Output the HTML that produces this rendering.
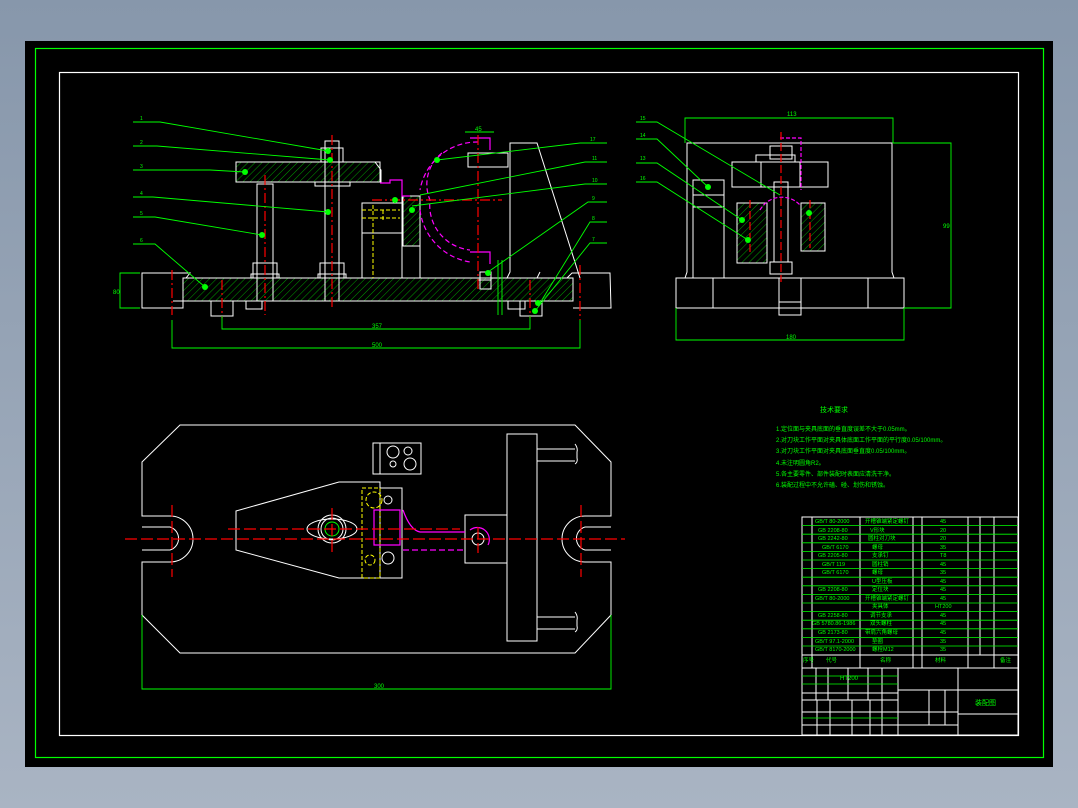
<!DOCTYPE html>
<html><head><meta charset="utf-8"><style>
html,body{margin:0;padding:0;width:1078px;height:808px;overflow:hidden;background:linear-gradient(#8797ab,#a9b4c3);}
svg{display:block}
text{font-family:"Liberation Sans","Noto Sans CJK SC",sans-serif;fill:#00ff00}
</style></head><body>
<svg width="1078" height="808" viewBox="0 0 1078 808" xmlns="http://www.w3.org/2000/svg">
<defs>
<pattern id="h" width="5" height="5" patternUnits="userSpaceOnUse" patternTransform="rotate(45)"><line x1="0" y1="0" x2="0" y2="5" stroke="#00c800" stroke-width="0.8"/></pattern>
</defs>
<rect x="25" y="41" width="1028" height="726" fill="#000"/>
<rect x="35.5" y="48.5" width="1008" height="709" fill="none" stroke="#00ff00" stroke-width="1.2"/>
<rect x="59.5" y="72.5" width="959" height="663" fill="none" stroke="#fff" stroke-width="1.2"/>

<!-- FRONT VIEW -->
<g fill="none" stroke="#fff" stroke-width="1">
<rect x="183" y="278" width="390" height="23" fill="url(#h)"/>
<path d="M183 278 H186 L190 273 H142 L142 308 H183 V301"/>
<path d="M573 301 V278 H567 L572 273 H610 L611 308 H573"/>
<path d="M173 301 H246 V309 H262 V301 M430 301 H508 V309 H525 V301 H573"/>
<rect x="211" y="301" width="22" height="15"/><rect x="520" y="301" width="22" height="15"/>
<rect x="236" y="162" width="144" height="20" fill="url(#h)"/>
<path d="M314 162 H375 L381 170 V182 H350 V186 H315 V182"/>
<rect x="257" y="184" width="16" height="117"/>
<rect x="325" y="141" width="14" height="160"/>
<rect x="321" y="148" width="22" height="14"/><rect x="320" y="263" width="24" height="15"/><rect x="253" y="263" width="24" height="15"/>
<rect x="251" y="274" width="28" height="4"/><rect x="318" y="274" width="28" height="4"/>
<rect x="362" y="203" width="40" height="75"/>
<line x1="362" y1="233" x2="402" y2="233"/>
<path d="M402 278 V196 H420 V278"/>
<rect x="403" y="196" width="17" height="50" fill="url(#h)"/>
<path d="M507 278 L510 272 V143 H537 L580 278"/>
<path d="M537 278 L540 272"/>
<rect x="468" y="153" width="40" height="14"/>
<rect x="480" y="272" width="11" height="17"/>
<path d="M478 280 H491"/>
</g>
<g fill="none" stroke="#ff00ff" stroke-width="1.2">
<path d="M478 142 A58 58 0 0 0 420 190" stroke-dasharray="5 3"/>
<path d="M442 153 A40 40 0 0 0 430 200 A45 45 0 0 0 470 250" stroke-dasharray="5 3"/>
<path d="M420 210 A60 60 0 0 0 470 262" stroke-dasharray="5 3"/>
<path d="M470 138 H490 V150 M470 252 H490 V264"/>
<path d="M380 183 H390 V180 H402 V196 H410"/>
</g>
<g stroke="#ffff00" stroke-width="1" fill="none" stroke-dasharray="4 2">
<path d="M362 210 H400 M362 218 H400 M373 205 V278 M383 210 V220"/>
</g>
<g stroke="#ff0000" stroke-width="1.2" stroke-dasharray="10 3 2 3" fill="none">
<line x1="265" y1="175" x2="265" y2="315"/><line x1="332" y1="135" x2="332" y2="310"/>
<line x1="478" y1="135" x2="478" y2="292"/><line x1="372" y1="200" x2="502" y2="200"/>
<line x1="172" y1="270" x2="172" y2="315"/><line x1="580" y1="265" x2="580" y2="320"/>
<line x1="222" y1="280" x2="222" y2="318"/><line x1="530" y1="280" x2="530" y2="318"/>
</g>
<g stroke="#00ff00" stroke-width="0.9" fill="none">
<path d="M133 122 H160 L328 151"/><path d="M133 146 H157 L330 160"/><path d="M133 170 H210 L245 172"/>
<path d="M133 197 H153 L328 212"/><path d="M133 217 H155 L262 235"/><path d="M133 244 H155 L205 287"/>
<path d="M607 143 H580 L437 160"/><path d="M607 162 H585 L420 195"/><path d="M607 184 H585 L412 206"/>
<path d="M607 202 H588 L488 272"/><path d="M607 222 H590 L540 303"/><path d="M607 243 H590 L535 311"/>
<path d="M172 320 V348 H580 V320"/><path d="M222 316 V329 H530 V316"/>
<path d="M140 273 H120 V308 H140"/>
<path d="M465 132 H494 M498 315 V260 M502 315 V260"/>
</g>
<g fill="#00ff00">
<circle cx="328" cy="151" r="3"/><circle cx="330" cy="160" r="3"/><circle cx="245" cy="172" r="3"/>
<circle cx="328" cy="212" r="3"/><circle cx="262" cy="235" r="3"/><circle cx="205" cy="287" r="3"/>
<circle cx="437" cy="160" r="3"/><circle cx="395" cy="200" r="3"/><circle cx="412" cy="210" r="3"/>
<circle cx="488" cy="273" r="3"/><circle cx="538" cy="303" r="3"/><circle cx="535" cy="311" r="3"/>
</g>
<g font-size="5">
<text x="140" y="120">1</text><text x="140" y="144">2</text><text x="140" y="168">3</text><text x="140" y="195">4</text><text x="140" y="215">5</text><text x="140" y="242">6</text>
<text x="590" y="141">17</text><text x="592" y="160">11</text><text x="592" y="182">10</text><text x="592" y="200">9</text><text x="592" y="220">8</text><text x="592" y="241">7</text>
<text x="640" y="120">15</text><text x="640" y="137">14</text><text x="640" y="160">13</text><text x="640" y="180">16</text>
</g>
<g font-size="6"><text x="372" y="328">357</text><text x="372" y="347">500</text><text x="113" y="294">80</text><text x="475" y="131">45</text></g>

<!-- SIDE VIEW -->
<g fill="none" stroke="#fff" stroke-width="1">
<path d="M676 278 H904 V308 H676 Z M713 278 V308 M868 278 V308"/>
<rect x="779" y="278" width="22" height="37"/><line x1="779" y1="302" x2="801" y2="302"/>
<path d="M685 278 L687 272 V143 H892 V272 L894 278"/>
<rect x="693" y="180" width="31" height="98"/><line x1="693" y1="195" x2="724" y2="195"/><line x1="693" y1="207" x2="724" y2="207"/>
<rect x="732" y="162" width="96" height="25"/><line x1="761" y1="162" x2="761" y2="187"/><line x1="800" y1="162" x2="800" y2="187"/>
<path d="M756 162 V155 H795 V162"/><rect x="770" y="146" width="22" height="13"/>
<rect x="774" y="182" width="14" height="80"/>
<rect x="770" y="262" width="22" height="12"/>
<rect x="737" y="203" width="30" height="60" fill="url(#h)"/>
<rect x="801" y="203" width="24" height="48" fill="url(#h)"/>
</g>
<g stroke="#ff00ff" fill="none" stroke-width="1.2"><path d="M760 210 A25 25 0 0 1 800 205" stroke-dasharray="4 2"/><path d="M780 138 H801 V190" stroke-dasharray="4 2"/></g>
<g stroke="#ff0000" stroke-width="1.2" stroke-dasharray="8 3" fill="none"><line x1="781" y1="132" x2="781" y2="282"/><line x1="750" y1="200" x2="750" y2="255"/><line x1="810" y1="200" x2="810" y2="248"/></g>
<g stroke="#00ff00" stroke-width="0.9" fill="none">
<path d="M685 143 V118 H893 V143"/><path d="M893 143 H951 V308 H904"/><path d="M676 308 V340 H904 V308"/>
<path d="M636 122 H657 L780 195"/><path d="M636 139 H657 L708 187"/><path d="M636 163 H657 L742 220"/><path d="M636 182 H657 L748 240"/>
</g>
<g fill="#00ff00"><circle cx="708" cy="187" r="3"/><circle cx="742" cy="220" r="3"/><circle cx="748" cy="240" r="3"/><circle cx="809" cy="213" r="3"/></g>
<g font-size="6"><text x="787" y="116">113</text><text x="943" y="228">99</text><text x="786" y="339">180</text></g>

<!-- PLAN VIEW -->
<g fill="none" stroke="#fff" stroke-width="1">
<path d="M142 462 L180 425 H575 L611 462 V516 H585 A23 23 0 0 0 585 562 H611 V615 L575 653 H180 L142 615 V562 H170 A23 23 0 0 0 170 516 H142 Z"/>
<path d="M142 527 H170 A12 12 0 0 1 170 550 H142"/>
<path d="M611 527 H585 A12 12 0 0 0 585 550 H611"/>
<rect x="507" y="434" width="30" height="207"/>
<path d="M537 449 H575 M537 461 H575 M537 617 H575 M537 629 H575"/>
<path d="M575 444 Q578 448 577 452 V458 Q578 462 575 464 M575 612 Q578 616 577 620 V626 Q578 630 575 632"/>
<path d="M236 511 L339 482 H380 V578 H339 L236 550 Z"/>
<rect x="373" y="443" width="48" height="31"/><line x1="380" y1="443" x2="380" y2="474"/>
<circle cx="393" cy="452" r="6"/><circle cx="408" cy="451" r="4"/><circle cx="393" cy="464" r="3"/><circle cx="410" cy="464" r="6"/>
<rect x="380" y="488" width="22" height="90"/>
<circle cx="332" cy="529" r="14"/><circle cx="332" cy="529" r="11"/><circle cx="332" cy="529" r="7" stroke="#00ff00"/>
<ellipse cx="332" cy="529" rx="25" ry="10"/>
<rect x="465" y="515" width="42" height="48"/><circle cx="478" cy="539" r="6"/>
<circle cx="388" cy="500" r="4"/><circle cx="388" cy="558" r="6"/>
</g>
<g stroke="#ffff00" fill="none" stroke-width="1" stroke-dasharray="4 2"><rect x="362" y="488" width="18" height="90"/><circle cx="374" cy="500" r="8"/><circle cx="370" cy="560" r="5"/></g>
<g stroke="#ff00ff" fill="none" stroke-width="1.2"><path d="M374 510 H400 V545 H374 Z" /><path d="M403 510 Q410 530 420 532 H465" /><path d="M403 550 H465" stroke-dasharray="6 3"/><path d="M470 530 A12 12 0 0 1 488 545"/></g>
<g stroke="#ff0000" stroke-width="1.2" stroke-dasharray="12 4" fill="none">
<line x1="125" y1="539" x2="625" y2="539"/><line x1="228" y1="529" x2="460" y2="529"/>
<line x1="172" y1="505" x2="172" y2="577"/><line x1="581" y1="505" x2="581" y2="577"/>
<line x1="332" y1="508" x2="332" y2="552"/><line x1="478" y1="527" x2="478" y2="553"/>
</g>
<g stroke="#00ff00" stroke-width="0.9" fill="none"><path d="M142 615 V689 H611 V615"/></g>
<text x="374" y="688" font-size="6">300</text>

<!-- TECH REQUIREMENTS -->
<g font-size="6">
<text x="820" y="412" font-size="7">技术要求</text>
<text x="776" y="431">1.定位面与夹具底面的垂直度误差不大于0.05mm。</text>
<text x="776" y="442">2.对刀块工作平面对夹具体底面工作平面的平行度0.05/100mm。</text>
<text x="776" y="453">3.对刀块工作平面对夹具底面垂直度0.05/100mm。</text>
<text x="776" y="465">4.未注明圆角R2。</text>
<text x="776" y="476">5.各主要零件、部件装配时表面应清洗干净。</text>
<text x="776" y="487">6.装配过程中不允许磕、碰、划伤和锈蚀。</text>
<text x="840" y="680">HT200</text>
<text x="975" y="705" font-size="7">装配图</text>
</g>

<!-- TITLE BLOCK -->
<g stroke="#fff" stroke-width="1" fill="none">
<rect x="802" y="517" width="216" height="218"/>
<path d="M812 517 V668 M860 517 V668 M913 517 V668 M922 517 V668 M968 517 V668 M980 517 V655 M994 517 V668"/>
<line x1="802" y1="655" x2="1018" y2="655"/><line x1="802" y1="668" x2="1018" y2="668"/>
<path d="M898 668 V735 M958 668 V735 M898 690 H1018 M958 714 H1018 M898 712 H958 M898 725 H958 M929 690 V725 M945 690 V725"/>
<path d="M802 693 H898 M802 700 H898 M816 668 V700 M828 668 V700 M848 668 V700 M868 668 V700 M882 668 V700"/>
<path d="M802 712 H898 M817 700 V735 M830 700 V735 M852 700 V735 M870 700 V735 M882 700 V735 M802 725 H898"/>
</g>
<g stroke="#00ff00" stroke-width="0.8">
<line x1="802" y1="525.6" x2="1018" y2="525.6"/><line x1="802" y1="534.2" x2="1018" y2="534.2"/><line x1="802" y1="542.8" x2="1018" y2="542.8"/><line x1="802" y1="551.4" x2="1018" y2="551.4"/><line x1="802" y1="560" x2="1018" y2="560"/><line x1="802" y1="568.6" x2="1018" y2="568.6"/><line x1="802" y1="577.2" x2="1018" y2="577.2"/><line x1="802" y1="585.8" x2="1018" y2="585.8"/><line x1="802" y1="594.4" x2="1018" y2="594.4"/><line x1="802" y1="603" x2="1018" y2="603"/><line x1="802" y1="611.6" x2="1018" y2="611.6"/><line x1="802" y1="620.2" x2="1018" y2="620.2"/><line x1="802" y1="628.8" x2="1018" y2="628.8"/><line x1="802" y1="637.4" x2="1018" y2="637.4"/><line x1="802" y1="646" x2="1018" y2="646"/>
<line x1="802" y1="676" x2="898" y2="676"/><line x1="802" y1="684" x2="898" y2="684"/><line x1="802" y1="718" x2="898" y2="718"/>
</g>
<g font-size="5.5">
<text x="815" y="523">GB/T 80-2000</text><text x="865" y="523">开槽锥端紧定螺钉</text><text x="940" y="523">45</text>
<text x="818" y="532">GB 2208-80</text><text x="870" y="532">V形块</text><text x="940" y="532">20</text>
<text x="818" y="540">GB 2242-80</text><text x="868" y="540">圆柱对刀块</text><text x="940" y="540">20</text>
<text x="822" y="549">GB/T 6170</text><text x="872" y="549">螺母</text><text x="940" y="549">35</text>
<text x="818" y="557">GB 2205-80</text><text x="872" y="557">支承钉</text><text x="940" y="557">T8</text>
<text x="822" y="566">GB/T 119</text><text x="872" y="566">圆柱销</text><text x="940" y="566">45</text>
<text x="822" y="574">GB/T 6170</text><text x="872" y="574">螺母</text><text x="940" y="574">35</text>
<text x="872" y="583">U型压板</text><text x="940" y="583">45</text>
<text x="818" y="591">GB 2208-80</text><text x="872" y="591">定位块</text><text x="940" y="591">45</text>
<text x="815" y="600">GB/T 80-2000</text><text x="865" y="600">开槽锥端紧定螺钉</text><text x="940" y="600">45</text>
<text x="872" y="608">夹具体</text><text x="935" y="608">HT200</text>
<text x="818" y="617">GB 2258-80</text><text x="870" y="617">调节支承</text><text x="940" y="617">45</text>
<text x="812" y="625">GB 5780.86-1986</text><text x="870" y="625">双头螺柱</text><text x="940" y="625">45</text>
<text x="818" y="634">GB 2173-80</text><text x="865" y="634">带肩六角螺母</text><text x="940" y="634">45</text>
<text x="815" y="643">GB/T 97.1-2000</text><text x="872" y="643">垫圈</text><text x="940" y="643">35</text>
<text x="815" y="651">GB/T 8170-2000</text><text x="872" y="651">螺栓M12</text><text x="940" y="651">35</text>
<text x="803" y="662">序号</text><text x="826" y="662">代号</text><text x="880" y="662">名称</text><text x="935" y="662">材料</text><text x="1000" y="662">备注</text>
</g>
</svg>
</body></html>
